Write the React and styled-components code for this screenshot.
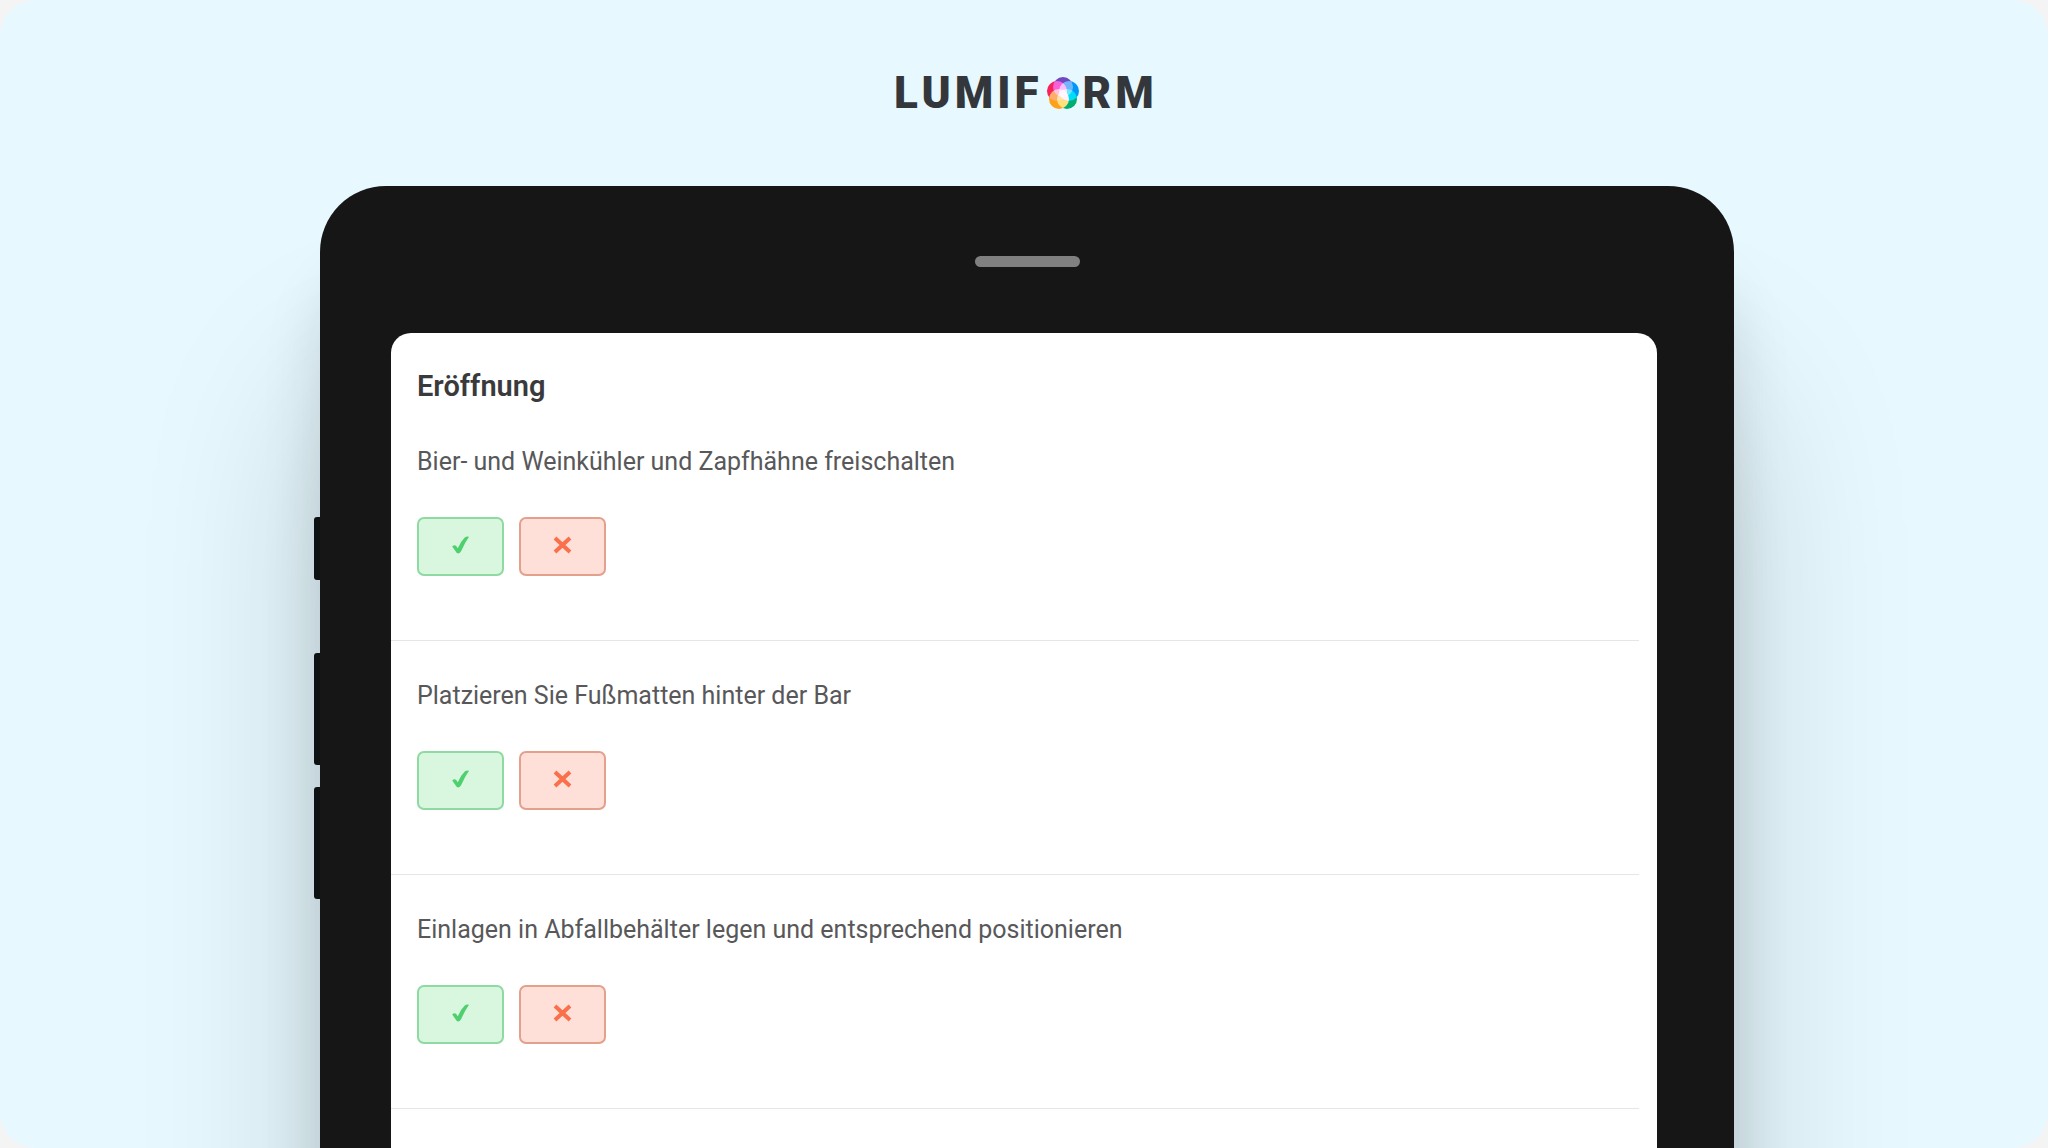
import React from 'react';
import styled, { createGlobalStyle } from 'styled-components';

const GlobalStyle = createGlobalStyle`
  *, *::before, *::after { box-sizing: border-box; }
  body { margin: 0; background: #f4f4f5; font-family: Roboto, "Open Sans", sans-serif; }
  h1, h2, p { margin: 0; }
`;

const Canvas = styled.main`
  display: flex;
  flex-direction: column;
  height: 100vh;
  overflow: hidden;
  border-radius: 36px;
  background: #e7f9ff;
`;

const Header = styled.header`
  display: flex;
  justify-content: center;
  padding: 69px 24px;
`;

const Wordmark = styled.h1`
  display: flex;
  align-items: center;
  gap: 4px;
  padding-left: 4px;
  color: #33373b;
  font: 900 44px/48px Roboto, sans-serif;
  letter-spacing: 4px;
`;

const Device = styled.section`
  display: flex;
  flex: none;
  padding: 0 314px;
`;

const Rail = styled.div`
  flex: none;
  width: 6px;
  padding-top: 331px;
`;

const SideKey = styled.div`
  height: ${(p) => (p.$short ? 63 : 112)}px;
  margin-bottom: ${(p) => (p.$short ? 73 : 22)}px;
  border-radius: 3px 0 0 3px;
  background: #111515;
`;

const Body = styled.div`
  flex: 1;
  min-width: 0;
  padding-top: 70px;
  border-radius: 66px 66px 0 0;
  background: #161616;
  box-shadow: 0 200px 180px rgba(0, 0, 0, 0.18), 0 90px 60px rgba(0, 0, 0, 0.12);
`;

const Speaker = styled.div`
  width: 105px;
  height: 11px;
  margin: 0 auto 66px;
  border-radius: 6px;
  background: #808080;
`;

const Screen = styled.div`
  margin: 0 77px 0 71px;
  padding: 34px 18px 400px 0;
  border-radius: 20px 20px 0 0;
  background: #fff;
`;

const Title = styled.h2`
  padding-left: 26px;
  color: #3a3a3c;
  font-size: 29px;
  font-weight: 600;
  line-height: 38px;
  margin-bottom: 2px;
`;

const Item = styled.article`
  height: 234px;
  padding: 37px 0 0 26px;
  border-bottom: 1px solid #e6e6e6;
`;

const Question = styled.p`
  color: #58585a;
  font-size: 25px;
  line-height: 36px;
`;

const Answers = styled.div`
  display: flex;
  gap: 15px;
  margin-top: 37px;
`;

const Answer = styled.button`
  display: grid;
  place-items: center;
  width: 87px;
  height: 59px;
  padding: 0 0 4px;
  border: 2px solid ${(p) => (p.$yes ? '#8fd9a2' : '#e3a08c')};
  border-radius: 7px;
  background: ${(p) => (p.$yes ? '#d9f6df' : '#fee0d9')};
  color: ${(p) => (p.$yes ? '#4fd06f' : '#f9704a')};
  cursor: pointer;
`;

const Check = () => (
  <svg width="19" height="20" viewBox="0 0 19 20" aria-hidden="true">
    <path d="M1.200 11.600 Q3.500 9 5.200 11 L6.800 13.200 Q9.500 6.500 14 2.200 Q16 1 18 1.800 Q14 7.500 10.200 16 Q8.500 19.500 5.800 18 Z" fill="currentColor" />
  </svg>
);

const Cross = () => (
  <svg width="19" height="20" viewBox="0 0 19 20" aria-hidden="true">
    <path d="M2 3 L17 17 M17 3 L2 17" fill="none" stroke="currentColor" strokeWidth="4" />
  </svg>
);

const PetalMark = styled.svg`
  isolation: isolate;

  circle { mix-blend-mode: screen; }
`;

const Petals = () => (
  <PetalMark width="32" height="34" viewBox="0 0 32 34" role="img" aria-label="O">
    <circle cx="16" cy="11" r="10" fill="#7048c0" />
    <circle cx="22" cy="15" r="10" fill="#0096f5" />
    <circle cx="20" cy="23" r="10" fill="#00ad70" />
    <circle cx="12" cy="23" r="10" fill="#ffa01a" />
    <circle cx="10" cy="15" r="10" fill="#f5225c" />
  </PetalMark>
);

const questions = [
  'Bier- und Weinkühler und Zapfhähne freischalten',
  'Platzieren Sie Fußmatten hinter der Bar',
  'Einlagen in Abfallbehälter legen und entsprechend positionieren',
];

export default function App() {
  return (
    <>
      <GlobalStyle />
      <Canvas>
        <Header>
          <Wordmark>
            <span>LUMIF</span>
            <Petals />
            <span>RM</span>
          </Wordmark>
        </Header>
        <Device>
          <Rail>
            <SideKey $short />
            <SideKey />
            <SideKey />
          </Rail>
          <Body>
            <Speaker />
            <Screen>
              <Title>Eröffnung</Title>
              {questions.map((text) => (
                <Item key={text}>
                  <Question>{text}</Question>
                  <Answers>
                    <Answer type="button" $yes aria-label="Ja"><Check /></Answer>
                    <Answer type="button" aria-label="Nein"><Cross /></Answer>
                  </Answers>
                </Item>
              ))}
            </Screen>
          </Body>
        </Device>
      </Canvas>
    </>
  );
}
